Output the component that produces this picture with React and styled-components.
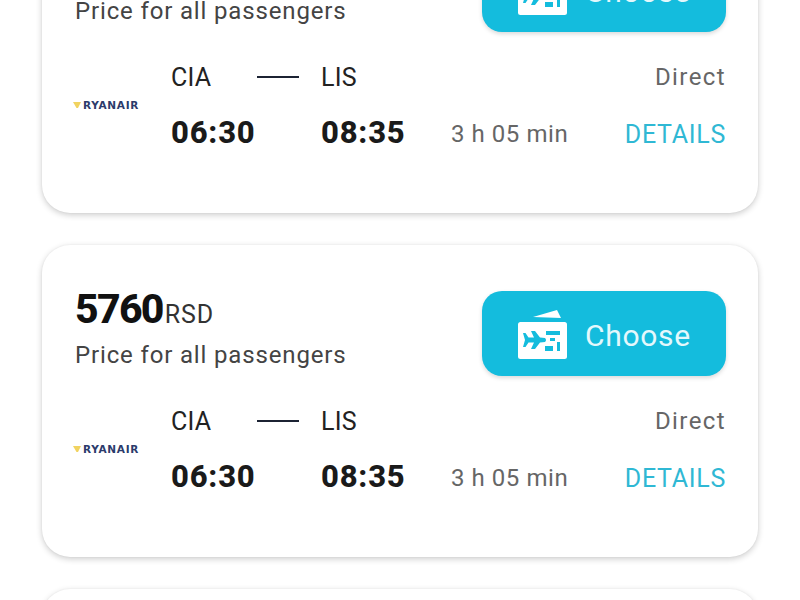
import React from 'react';
import styled, { createGlobalStyle } from 'styled-components';

const GlobalStyle = createGlobalStyle`
  html, body {
    margin: 0;
    padding: 0;
    background: #fff;
    font-family: Roboto, "Liberation Sans", sans-serif;
  }
`;

const Screen = styled.div`
  width: 800px;
  height: 600px;
  overflow: hidden;
`;

const List = styled.div`
  display: flex;
  flex-direction: column;
  gap: 32px;
  margin-top: -99px;
  padding: 0 42px;
`;

const Card = styled.section`
  box-sizing: border-box;
  height: 312px;
  padding: 46px 32px 0 33px;
  background: #fff;
  border-radius: 28px;
  box-shadow: 0 2px 6px rgba(0, 0, 0, 0.2), 0 0 2px rgba(0, 0, 0, 0.05);
`;

const Top = styled.div`
  display: flex;
  justify-content: space-between;
  height: 85px;
`;

const PriceBlock = styled.div`
  display: flex;
  flex-direction: column;
`;

const Price = styled.div`
  font-size: 41px;
  line-height: 36px;
  font-weight: 800;
  color: #111;
  letter-spacing: -1.7px;
`;

const Currency = styled.span`
  font-size: 25px;
  font-weight: 400;
  color: #333;
  margin-left: 2px;
  letter-spacing: 0.9px;
`;

const PriceNote = styled.div`
  margin-top: 8px;
  font-size: 24px;
  line-height: 28px;
  color: #444;
  letter-spacing: 0.85px;
`;

const ChooseButton = styled.button`
  display: flex;
  align-items: center;
  gap: 18px;
  width: 244px;
  height: 85px;
  padding: 0 0 0 35px;
  border: 0;
  border-radius: 20px;
  background: #14bcdd;
  color: #e4f8fc;
  font-family: inherit;
  font-size: 30px;
  letter-spacing: 0.7px;
  box-shadow: 0 2px 4px rgba(0, 0, 0, 0.15);
`;

const ButtonLabel = styled.span`
  padding-top: 4px;
`;

const Flight = styled.div`
  display: grid;
  grid-template-columns: 96px 150px 130px 1fr;
  grid-template-rows: 34px 42px;
  row-gap: 17px;
  margin-top: 28px;
  align-items: center;
`;

const LogoCell = styled.div`
  grid-row: span 2;
  display: flex;
  align-items: center;
  gap: 2px;
  margin-left: -2px;
  padding-bottom: 4px;
`;

const LogoText = styled.span`
  font-family: "DejaVu Sans", sans-serif;
  font-size: 10.5px;
  font-weight: 700;
  color: #2b3b6b;
  letter-spacing: 0.7px;
`;

const RouteCell = styled.div`
  display: flex;
  align-items: center;
  font-size: 25px;
  color: #222;
  letter-spacing: 0.2px;
`;

const Airport = styled.span`
  width: 86px;
`;

const RouteLine = styled.span`
  width: 42px;
  height: 2px;
  background: #1c2333;
`;

const Stops = styled.div`
  text-align: right;
  font-size: 24px;
  color: #666;
  letter-spacing: 1.4px;
`;

const Time = styled.div`
  font-size: 31px;
  font-weight: 800;
  color: #1a1a1a;
  letter-spacing: 0.8px;
`;

const Info = styled.div`
  display: flex;
  justify-content: space-between;
  margin-top: 4px;
`;

const Duration = styled.span`
  font-size: 24px;
  color: #666;
  letter-spacing: 0.55px;
`;

const Details = styled.span`
  font-size: 25px;
  color: #2fb8d4;
  letter-spacing: 0.7px;
`;

const TicketIcon = () => (
  <svg width="50" height="50" viewBox="0 0 50 50" aria-hidden="true">
    <path d="M16 8 L40 1 L44 9 Z" fill="#fff" />
    <rect x="1" y="13" width="49" height="37" rx="2.5" fill="#fff" />
    <path
      d="M6 24 L8.5 24 L11.5 28.5 L17 28.5 L14 22 L18 22 L23 28.5 L28 29 Q30 31 28 33 L23 33.5 L18 40 L14 40 L17 33.5 L11.5 33.5 L8.5 38 L6 38 L8 31 Z"
      fill="#14bcdd"
    />
    <path d="M29 22 H43 V26 H29 Z M33 29 H38 V32 H33 Z M40 33 H43 V42 H40 Z M28 37 H36 V42 H28 Z" fill="#14bcdd" />
  </svg>
);

const RyanairHarp = () => (
  <svg width="8" height="8" viewBox="0 0 8 8" aria-hidden="true">
    <path d="M0 1 H8 L5 7 H3.5 Z" fill="#f1d360" />
  </svg>
);

const FlightCard = () => (
  <Card>
    <Top>
      <PriceBlock>
        <Price>
          5760<Currency>RSD</Currency>
        </Price>
        <PriceNote>Price for all passengers</PriceNote>
      </PriceBlock>
      <ChooseButton type="button">
        <TicketIcon />
        <ButtonLabel>Choose</ButtonLabel>
      </ChooseButton>
    </Top>
    <Flight>
      <LogoCell>
        <RyanairHarp />
        <LogoText>RYANAIR</LogoText>
      </LogoCell>
      <RouteCell>
        <Airport>CIA</Airport>
        <RouteLine />
      </RouteCell>
      <RouteCell>LIS</RouteCell>
      <Stops>Direct</Stops>
      <Time>06:30</Time>
      <Time>08:35</Time>
      <Info>
        <Duration>3 h 05 min</Duration>
        <Details>DETAILS</Details>
      </Info>
    </Flight>
  </Card>
);

export default function App() {
  return (
    <Screen>
      <GlobalStyle />
      <List>
        <FlightCard />
        <FlightCard />
        <FlightCard />
      </List>
    </Screen>
  );
}
